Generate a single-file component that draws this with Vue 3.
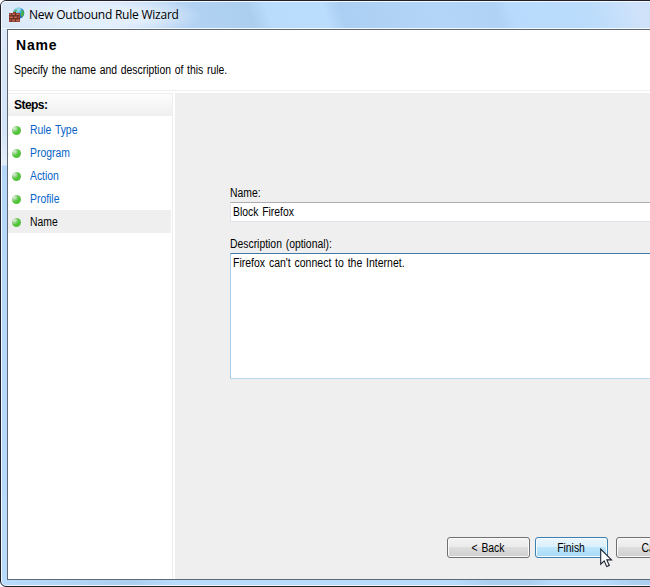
<script setup>
const steps = ['Rule Type', 'Program', 'Action', 'Profile', 'Name']
const current = 'Name'
</script>

<template>
  <div class="window">
    <div class="titlebar">
      <svg class="app-icon" width="16" height="16" viewBox="0 0 16 16">
        <defs>
          <radialGradient id="globe" cx=".4" cy=".25" r=".8">
            <stop offset="0" stop-color="#b9efff" />
            <stop offset=".45" stop-color="#3a9be6" />
            <stop offset="1" stop-color="#1746a8" />
          </radialGradient>
        </defs>
        <circle cx="9.7" cy="6" r="5.6" fill="url(#globe)" />
        <path d="M8 .8 12.5 1.5 11 4 8 4.5 6 6 4.6 4z" fill="#94d9e5" />
        <path d="M12 3.2 14.4 3.5 15 7 13 10.6 11.5 8 12.5 6z" fill="#48b63c" />
        <path d="M5.3 3.5 7.5 2.5 8 4 6 5.5 4.8 5z" fill="#4cb752" />
        <path d="M0 6h4V5h3v1h4v9H0z" fill="#9c4435" />
        <path d="M0 8.5h11M0 11.5h11M2.5 6v2.5M6.5 5v3.5M4.5 8.5v3M8.5 8.5v3M2.5 11.5V15M6.5 11.5V15" stroke="#673027" stroke-width=".8" />
        <path d="M.5 7.5h1.5M3.5 7.5H5.5M7.5 7.5H10M1 10.5h2.5M5.5 10.5H7.5M3.5 13.5h2M7.5 13.5H10" stroke="#c77860" stroke-width=".8" />
      </svg>
      <span class="title">New Outbound Rule Wizard</span>
    </div>
    <div class="client">
      <header class="heading">
        <h1>Name</h1>
        <p><span class="text">Specify the name and description of this rule.</span></p>
      </header>
      <div class="main">
        <nav class="sidebar">
          <div class="steps-title">Steps:</div>
          <ul>
            <li v-for="step in steps" :key="step" :class="{ current: step === current }">
              <i class="bullet"></i><span class="text">{{ step }}</span>
            </li>
          </ul>
        </nav>
        <section class="page">
          <div class="form">
            <label class="name-label"><span class="text">Name:</span></label>
            <div class="field name-field"><span class="text">Block Firefox</span></div>
            <label class="desc-label"><span class="text">Description (optional):</span></label>
            <div class="field desc-field"><span class="text">Firefox can't connect to the Internet.</span></div>
          </div>
          <div class="buttons">
            <button class="back"><span class="text">&lt; Back</span></button>
            <button class="finish"><span class="text">Finish</span></button>
            <button class="cancel"><span class="text">Cancel</span></button>
          </div>
        </section>
      </div>
    </div>
    <svg class="cursor" width="13" height="21" viewBox="0 0 13 21">
      <path d="M.7 1v15.2l3.5-3.3 2.5 5.7 2.6-1.1-2.5-5.6h4.7z" fill="#fff" stroke="#1c2130" stroke-width="1.1" />
    </svg>
  </div>
</template>

<style>
body {
  background: #fff;
  overflow: hidden;
}
</style>

<style scoped>
* {
  box-sizing: border-box;
}
.window {
  position: relative;
  width: 658px;
  height: 587px;
  padding: 0 0 6px 6px;
  border: 1px solid #20202c;
  border-radius: 6px;
  overflow: hidden;
  color: #000;
  font: 12px/14px "Liberation Sans", Arial, sans-serif;
  background:
    linear-gradient(90deg, #b9dbfc 0, #b4d6f8 50px, #accff1 130px, #b9dcfd 175px, #b9dcfd 450px, #accff1 490px, #accff1 530px, #b9dcfd 550px, #b9dcfd 600px, #accff1 635px) bottom / 100% 7px no-repeat,
    linear-gradient(180deg, #dce9f8 0, #d3e4f7 130px, #e2edf9 164px, #b4d7fc 165px, #b9dbfc 100%);
  box-shadow: inset 0 0 0 1px #f0f7ff;
}
.text {
  display: inline-block;
  transform: scaleX(0.865);
  transform-origin: left center;
  word-spacing: 1px;
  white-space: nowrap;
}
.titlebar {
  display: flex;
  align-items: flex-start;
  height: 28px;
  margin: 0 0 0 -6px;
  padding: 6px 0 0 7px;
  border: 1px solid #f4f9ff;
  border-width: 1px 0 1px 1px;
  border-radius: 5px 0 0 0;
  background:
    radial-gradient(ellipse 105px 22px at 95px 14px, rgba(232, 242, 253, 0.85) 45%, rgba(232, 242, 253, 0) 100%),
    linear-gradient(72deg, #dbe8f7 0, #cde1f7 100px, #b2d2f3 185px, #abceef 240px, #b9dcfc 258px, #badcfd 312px, #abcff2 328px, #b3d5f8 420px, #b0d3f5 475px, #b8dbfd 490px, #bbdcfb 565px, #cfe2fa 610px, #cbe0f8 100%);
}
.app-icon {
  flex: none;
  margin: -1px 4px 0 0;
}
.title {
  font: 12px/14px "Open Sans", "Noto Sans", sans-serif;
  letter-spacing: -0.23px;
  white-space: nowrap;
}
.client {
  display: flex;
  flex-direction: column;
  height: 551px;
  border: 1px solid #5f6872;
  background: #fff;
}
.heading {
  flex: none;
  height: 61px;
  padding: 7px 0 0 6px;
  border-bottom: 1px solid #efefef;
}
h1 {
  margin: 0 0 0 2px;
  font: bold 14px/16px "Liberation Sans", Arial, sans-serif;
  letter-spacing: 0.8px;
}
p {
  margin: 10px 0 0;
}
.main {
  display: flex;
  flex: 1;
  padding-top: 2px;
}
.sidebar {
  flex: none;
  width: 165px;
  border: 1px solid #eee;
  border-width: 1px 1px 0 0;
}
.steps-title {
  height: 22px;
  padding: 4px 0 0 6px;
  font-weight: bold;
  letter-spacing: -0.55px;
  background: linear-gradient(#fdfdfd, #efefef);
}
ul {
  margin: 2px 0 0;
  padding: 0;
  list-style: none;
}
li {
  display: flex;
  align-items: center;
  width: 163px;
  height: 23px;
  padding-left: 4px;
  color: #0563c8;
}
li.current {
  color: #000;
  background: #efefef;
}
.bullet {
  width: 9px;
  height: 9px;
  margin: 1px 9px 0 0;
  border-radius: 50%;
  background: radial-gradient(circle at 25% 25%, #e3f3de 0, #a5d79c 22%, #52c53a 48%, #56c23c 75%, #90bd87 100%);
}
.page {
  display: flex;
  flex-direction: column;
  justify-content: space-between;
  flex: 1;
  margin-left: 2px;
  padding: 93px 0 21px 55px;
  background: #efefef;
}
.form {
  display: flex;
  flex-direction: column;
}
label {
  height: 16px;
}
.desc-label {
  margin-top: 15px;
}
.field {
  padding: 2px 0 0 2px;
  border: 1px solid #e2e3ea;
  border-top-color: #abadb3;
  background: #fff;
}
.name-field {
  height: 20px;
}
.desc-field {
  height: 126px;
  border-color: #3d7bad #a4c9e3 #b7d9ed #a8cce8;
}
.desc-field .text {
  transform: scaleX(0.875);
}
.buttons {
  display: flex;
  margin-left: 217px;
}
button {
  flex: none;
  height: 21px;
  padding: 0;
  border: 1px solid #707070;
  border-radius: 3px;
  color: #000;
  font: 12px/14px "Liberation Sans", Arial, sans-serif;
  background: linear-gradient(#f2f2f2 0, #ebebeb 48%, #dddddd 50%, #cfcfcf 100%);
  box-shadow: inset 0 0 0 1px #fafafa;
}
button .text {
  transform-origin: center;
}
.back {
  width: 83px;
}
.finish {
  width: 73px;
  margin: 0 8px 0 5px;
  border-color: #3c7fb1;
  background: linear-gradient(#eaf6fd 0, #d9f0fc 48%, #bee6fd 50%, #a7d9f5 100%);
}
.cancel {
  width: 83px;
}
.cursor {
  position: absolute;
  left: 599px;
  top: 547px;
}
</style>
